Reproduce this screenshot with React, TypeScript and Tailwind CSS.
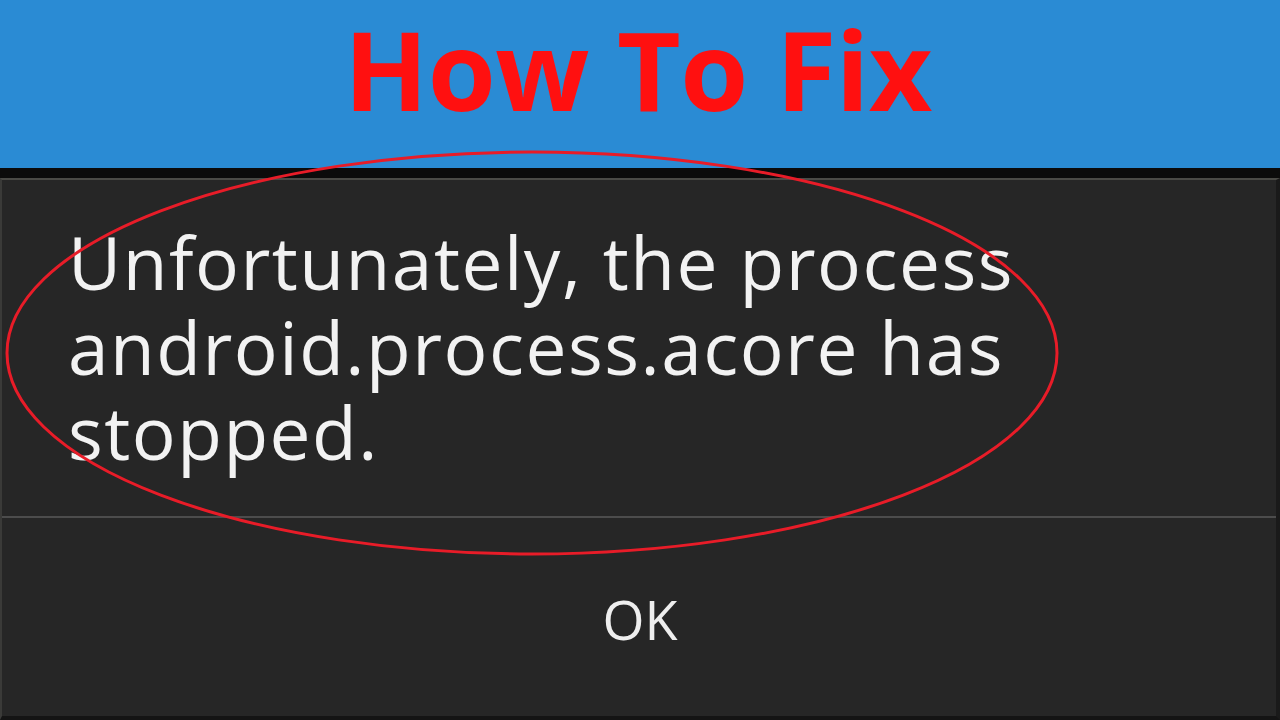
export default function App() {
  return (
    <div className="relative flex h-[720px] w-[1280px] flex-col overflow-hidden bg-[#111111] font-['Open_Sans',sans-serif]">
      <header className="flex h-[168px] items-center justify-center bg-[#2a8bd4]">
        <h1 className="pb-[32px] pr-[4px] text-[110px] font-bold leading-[1.2] tracking-[-0.5px] text-[#ff1010]">
          How To Fix
        </h1>
      </header>

      <div className="h-[10px] bg-[#0b0b0b]" />

      <div className="flex flex-1 flex-col border-t-2 border-l-2 border-r-[4px] border-b-[4px] border-t-[#4a4a46] border-l-[#3a3a38] border-r-[#1a1a1a] border-b-[#141414] bg-[#262626]">
        <div className="h-[336px] pl-[66px] pt-[39px]">
          <p className="text-[73px] leading-[85px] tracking-[1.5px] text-[#f2f2f2]">
            Unfortunately, the process
            <br />
            android.process.acore has
            <br />
            stopped.
          </p>
        </div>
        <div className="h-[2px] bg-[#4c4c4c]" />
        <div className="flex flex-1 items-center justify-center pt-[4px] pl-[2px]">
          <span className="text-[54px] leading-none text-[#eeeeee]">OK</span>
        </div>
      </div>

      <svg
        className="pointer-events-none absolute left-0 top-0"
        width="1280"
        height="720"
        viewBox="0 0 1280 720"
      >
        <ellipse cx="532" cy="353" rx="525" ry="201" fill="none" stroke="#e81c28" strokeWidth="3" />
      </svg>
    </div>
  );
}
